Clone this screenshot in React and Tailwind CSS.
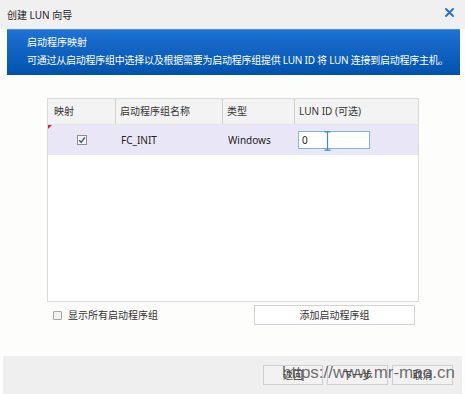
import React from "react";

const font = { fontFamily: '"Noto Sans", "Noto Sans CJK SC", sans-serif' };

export default function App() {
  return (
    <div
      className="relative w-[465px] h-[394px] overflow-hidden bg-[#fdfdfb] flex flex-col text-[10px] text-[#222]"
      style={font}
    >
      {/* Title bar */}
      <div className="h-[29px] shrink-0 bg-[#f0f0f0] flex items-center justify-between pl-[7px] pr-[11px]">
        <span className="text-[10px] text-[#222] leading-none mt-[1px]">创建 LUN 向导</span>
        <svg width="9" height="9" viewBox="0 0 9 9" className="-mt-[5px]">
          <path d="M1 1 L8 8 M8 1 L1 8" stroke="#1f6fc8" strokeWidth="1.8" strokeLinecap="round" />
        </svg>
      </div>

      {/* Banner */}
      <div className="h-[46px] shrink-0 ml-[7px] mr-[5px] bg-gradient-to-b from-[#1d72d4] to-[#0052ac] border-t border-[#4f8fd8] flex flex-col justify-start pt-[5px] pl-[20px] gap-[4px] text-white whitespace-nowrap">
        <div className="leading-[14px] text-[10px]">启动程序映射</div>
        <div className="leading-[14px] text-[10px] tracking-[-0.25px]">
          可通过从启动程序组中选择以及根据需要为启动程序组提供 LUN ID 将 LUN 连接到启动程序主机。
        </div>
      </div>

      {/* Content */}
      <div className="flex-1 flex flex-col pl-[47px] pt-[23px]">
        <div className="relative w-[372px] h-[204px] border border-[#dadada] bg-white">
          {/* header */}
          <div className="flex h-[26px] bg-[#f3f3f3] border-b border-[#e6e6e6] text-[#333]">
            <div className="w-[68px] flex items-center pl-[6px] border-r border-[#d0d0d0]">映射</div>
            <div className="w-[107px] flex items-center pl-[4px] border-r border-[#d0d0d0]">启动程序组名称</div>
            <div className="w-[72px] flex items-center pl-[4px] border-r border-[#d0d0d0]">类型</div>
            <div className="flex-1 flex items-center pl-[4px]">LUN ID (可选)</div>
          </div>
          {/* row */}
          <div className="relative flex h-[30px] bg-[#e9e7f7] items-center">
            <div className="absolute left-0 top-0 w-0 h-0 border-t-[4px] border-t-[#e02020] border-r-[4px] border-r-transparent" />
            <div className="w-[68px] flex items-center justify-center">
              <div className="w-[10px] h-[10px] border border-[#8e8f8f] bg-[#f4f4f4] flex items-center justify-center">
                <svg width="8" height="8" viewBox="0 0 8 8">
                  <path d="M1.2 4.2 L3.2 6.3 L6.8 1.5" stroke="#2a4f9a" strokeWidth="1.3" fill="none" />
                </svg>
              </div>
            </div>
            <div className="w-[107px] pl-[5px] text-[#222]">FC_INIT</div>
            <div className="w-[72px] pl-[5px] text-[#222]">Windows</div>
            <div className="flex-1 pl-[3px]">
              <div className="relative w-[72px] h-[18px] border border-[#7fb2e6] bg-white flex items-center pl-[3px] text-[#222]">
                0
                <svg width="7" height="20" viewBox="0 0 7 20" className="absolute left-[25px] top-[-1px]">
                  <path d="M0.5 0.8 H6.5 M3.5 0.8 V19.2 M0.5 19.2 H6.5" stroke="#3d8fb0" strokeWidth="1.2" fill="none" />
                </svg>
              </div>
            </div>
          </div>
        </div>

        {/* bottom controls */}
        <div className="flex items-center w-[368px] mt-[3px] h-[20px]">
          <div className="flex items-center pl-[6px] flex-1">
            <div className="w-[9px] h-[9px] border border-[#a8a8a8] bg-[#f2f2f2] rounded-[1px]" />
            <span className="ml-[6px] text-[#333]">显示所有启动程序组</span>
          </div>
          <div className="w-[161px] h-[20px] border border-[#d2d2d2] bg-white flex items-center justify-center text-[#333]">
            添加启动程序组
          </div>
        </div>
      </div>

      {/* Footer */}
      <div className="relative h-[38px] shrink-0 mx-[3px] bg-[#efefef] flex items-start justify-end pt-[9px] pr-[9px] gap-[4px]">
        <div className="w-[60px] h-[20px] border border-[#cfcfcf] bg-[#f2f2f2] flex items-center justify-center text-[#333]">返回</div>
        <div className="w-[61px] h-[20px] border border-[#cfcfcf] bg-[#f2f2f2] flex items-center justify-center text-[#333]">下一步</div>
        <div className="w-[61px] h-[20px] border border-[#cfcfcf] bg-[#f2f2f2] flex items-center justify-center text-[#333]">取消</div>
        <div
          className="absolute left-[279px] top-[8px] text-[17px] leading-none text-[#4a4a4a]/80 whitespace-nowrap"
          style={{ fontFamily: '"Liberation Sans", "DejaVu Sans", sans-serif' }}
        >
          https://www.mr-mao.cn
        </div>
      </div>
    </div>
  );
}
